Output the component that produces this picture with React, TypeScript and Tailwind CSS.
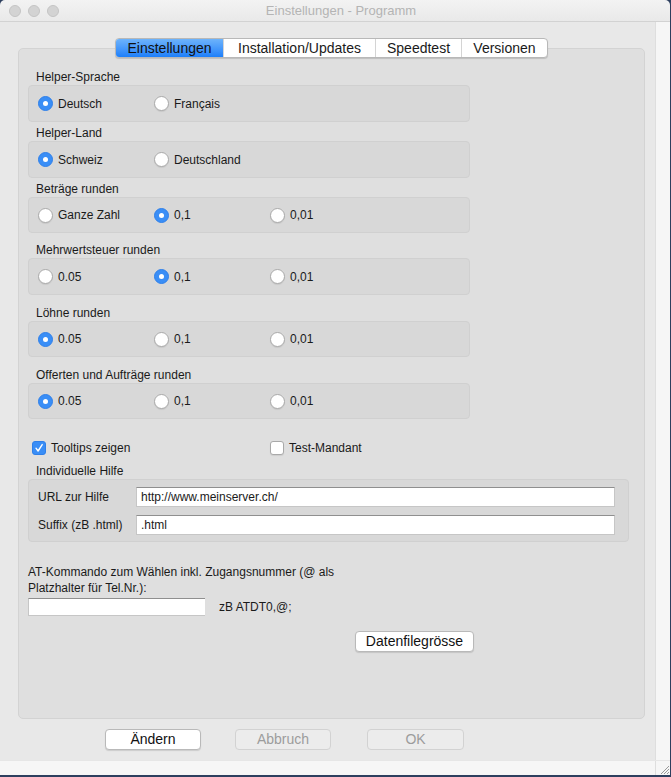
import type { ReactNode } from "react"

const font = { fontFamily: '"Liberation Sans", Arial, sans-serif' }

function Radio({ checked, label }: { checked?: boolean; label: string }) {
  return (
    <div className="flex items-center w-[116px]">
      {checked ? (
        <span className="w-[15px] h-[15px] rounded-full bg-[#3a8ef6] border border-[#2f80ea] flex items-center justify-center">
          <span className="w-[5px] h-[5px] rounded-full bg-white" />
        </span>
      ) : (
        <span className="w-[15px] h-[15px] rounded-full bg-white border border-[#a9a9a9] shadow-[0_1px_1px_rgba(0,0,0,0.08)]" />
      )}
      <span className="ml-[5px] leading-[16px]">{label}</span>
    </div>
  )
}

function Group({ title, options, selected, gap, h }: { title: string; options: string[]; selected: number; gap: string; h: string }) {
  return (
    <div className={gap}>
      <div className="ml-[8px] leading-[16px] h-[16px]">{title}</div>
      <div className={`w-[442px] rounded-[4px] bg-[#d8d8d8] border border-[#d0d0d0] flex items-center pl-[9px] ${h}`}>
        {options.map((o, i) => (
          <Radio key={o + i} label={o} checked={i === selected} />
        ))}
      </div>
    </div>
  )
}

function Checkbox({ checked, label }: { checked?: boolean; label: string }) {
  return (
    <div className="flex items-center">
      {checked ? (
        <span className="w-[14px] h-[14px] rounded-[3px] bg-[#3a8ef6] border border-[#2f80ea] flex items-center justify-center">
          <svg width="10" height="10" viewBox="0 0 10 10">
            <path d="M2 5.2 L4.1 8 L8.2 1.6" fill="none" stroke="white" strokeWidth="1.4" strokeLinecap="round" strokeLinejoin="round" />
          </svg>
        </span>
      ) : (
        <span className="w-[14px] h-[14px] rounded-[3px] bg-white border border-[#a9a9a9] shadow-[0_1px_1px_rgba(0,0,0,0.08)]" />
      )}
      <span className="ml-[5px] leading-[16px]">{label}</span>
    </div>
  )
}

function TextInput({ value, className }: { value?: string; className: string }) {
  return (
    <div className={`bg-white border border-[#c6c6c6] border-t-[#8f8f8f] flex items-center pl-[4px] leading-[16px] ${className}`}>
      {value}
    </div>
  )
}

function Button({ children, disabled, className }: { children: ReactNode; disabled?: boolean; className: string }) {
  return (
    <div
      className={`h-[21px] rounded-[4px] border flex items-center justify-center text-[14px] ${
        disabled
          ? "bg-[#ececec] border-[#d2d2d2] text-[#9c9c9c]"
          : "bg-white border-[#b9b9b9] text-[#111] shadow-[0_1px_1px_rgba(0,0,0,0.12)]"
      } ${className}`}
    >
      {children}
    </div>
  )
}

const tabs = ["Einstellungen", "Installation/Updates", "Speedtest", "Versionen"]

export default function App() {
  return (
    <div className="w-[671px] h-[777px] bg-[#2d3f5e] overflow-hidden text-[12px] text-[#1a1a1a]" style={font}>
      <div className="w-[670px] h-[775px] flex flex-col rounded-t-[5px] overflow-hidden">
        {/* title bar */}
        <div className="h-[22px] bg-gradient-to-b from-[#f3f3f3] to-[#e9e9e9] border-b border-[#d2d2d2] flex items-center">
          <div className="flex gap-[7px] ml-[9px]">
            <span className="w-[12px] h-[12px] rounded-full bg-[#d3d3d3] border border-[#c4c4c4]" />
            <span className="w-[12px] h-[12px] rounded-full bg-[#d3d3d3] border border-[#c4c4c4]" />
            <span className="w-[12px] h-[12px] rounded-full bg-[#d3d3d3] border border-[#c4c4c4]" />
          </div>
          <div className="flex-1 text-center text-[13px] text-[#b4b4b4] -ml-[55px] pl-[8px]">Einstellungen - Programm</div>
        </div>

        <div className="flex flex-1">
          {/* main */}
          <div className="w-[655px] bg-[#e8e8e8] flex flex-col pt-[16px]">
            <div className="ml-[18px] w-[627px] flex justify-center relative z-10">
              <div className="flex h-[20px] rounded-[4px] border border-[#b8b8b8] bg-white shadow-[0_1px_1px_rgba(0,0,0,0.15)] overflow-hidden text-[14px]">
                {tabs.map((t, i) => (
                  <div
                    key={t}
                    className={`flex items-center justify-center ${
                      i === 0
                        ? "w-[107px] bg-gradient-to-b from-[#6db3fb] to-[#1b7ffa] text-[#111]"
                        : i === 1
                          ? "w-[152px] border-l border-[#d4d4d4]"
                          : "w-[86px] border-l border-[#d4d4d4]"
                    }`}
                  >
                    {t}
                  </div>
                ))}
              </div>
            </div>

            <div className="ml-[18px] w-[627px] h-[671px] -mt-[10px] rounded-[5px] bg-[#dfdfdf] border border-[#d3d3d3] pl-[9px] pt-[20px] flex flex-col">
              <Group title="Helper-Sprache" options={["Deutsch", "Français"]} selected={0} gap="" h="h-[37px]" />
              <Group title="Helper-Land" options={["Schweiz", "Deutschland"]} selected={0} gap="mt-[3px]" h="h-[37px]" />
              <Group title="Beträge runden" options={["Ganze Zahl", "0,1", "0,01"]} selected={1} gap="mt-[3px]" h="h-[36px]" />
              <Group title="Mehrwertsteuer runden" options={["0.05", "0,1", "0,01"]} selected={1} gap="mt-[9px]" h="h-[37px]" />
              <Group title="Löhne runden" options={["0.05", "0,1", "0,01"]} selected={0} gap="mt-[10px]" h="h-[36px]" />
              <Group title="Offerten und Aufträge runden" options={["0.05", "0,1", "0,01"]} selected={0} gap="mt-[10px]" h="h-[36px]" />

              <div className="flex mt-[21px] ml-[4px] h-[16px] items-center">
                <div className="w-[238px]">
                  <Checkbox checked label="Tooltips zeigen" />
                </div>
                <Checkbox label="Test-Mandant" />
              </div>

              <div className="mt-[7px] ml-[8px] leading-[16px]">Individuelle Hilfe</div>
              <div className="w-[601px] h-[63px] rounded-[4px] bg-[#d8d8d8] border border-[#d0d0d0] pt-[7px] pl-[9px] flex flex-col gap-[8px]">
                <div className="flex items-center">
                  <span className="w-[98px]">URL zur Hilfe</span>
                  <TextInput value="http://www.meinserver.ch/" className="w-[479px] h-[20px]" />
                </div>
                <div className="flex items-center">
                  <span className="w-[98px]">Suffix (zB .html)</span>
                  <TextInput value=".html" className="w-[479px] h-[20px]" />
                </div>
              </div>

              <div className="mt-[22px] leading-[16px]">
                AT-Kommando zum Wählen inkl. Zugangsnummer (@ als
                <br />
                Platzhalter für Tel.Nr.):
              </div>
              <div className="flex items-center mt-[1px]">
                <TextInput className="w-[177px] h-[18px] border-r-0" />
                <span className="ml-[14px] pt-[1px]">zB ATDT0,@;</span>
              </div>

              <div className="mt-[15px] ml-[327px]">
                <Button className="w-[119px]">Datenfilegrösse</Button>
              </div>
            </div>

            <div className="flex mt-[10px] ml-[105px]">
              <Button className="w-[96px]">Ändern</Button>
              <Button disabled className="w-[96px] ml-[34px]">Abbruch</Button>
              <Button disabled className="w-[97px] ml-[36px]">OK</Button>
            </div>
          </div>
          {/* right strip */}
          <div className="w-[15px] bg-[#f6f6f6] border-l border-[#dedede]" />
        </div>

        {/* bottom strip */}
        <div className="h-[15px] bg-[#f6f6f6] border-t border-[#e6e6e6] flex justify-end">
          <div className="w-[15px] h-[14px] border-l border-[#dedede] flex items-end justify-end">
            <svg width="12" height="12" viewBox="0 0 12 12">
              <path d="M11 3 L3 11 M11 6 L6 11 M11 9 L9 11" stroke="#9a9a9a" strokeWidth="1" />
            </svg>
          </div>
        </div>
      </div>
    </div>
  )
}
